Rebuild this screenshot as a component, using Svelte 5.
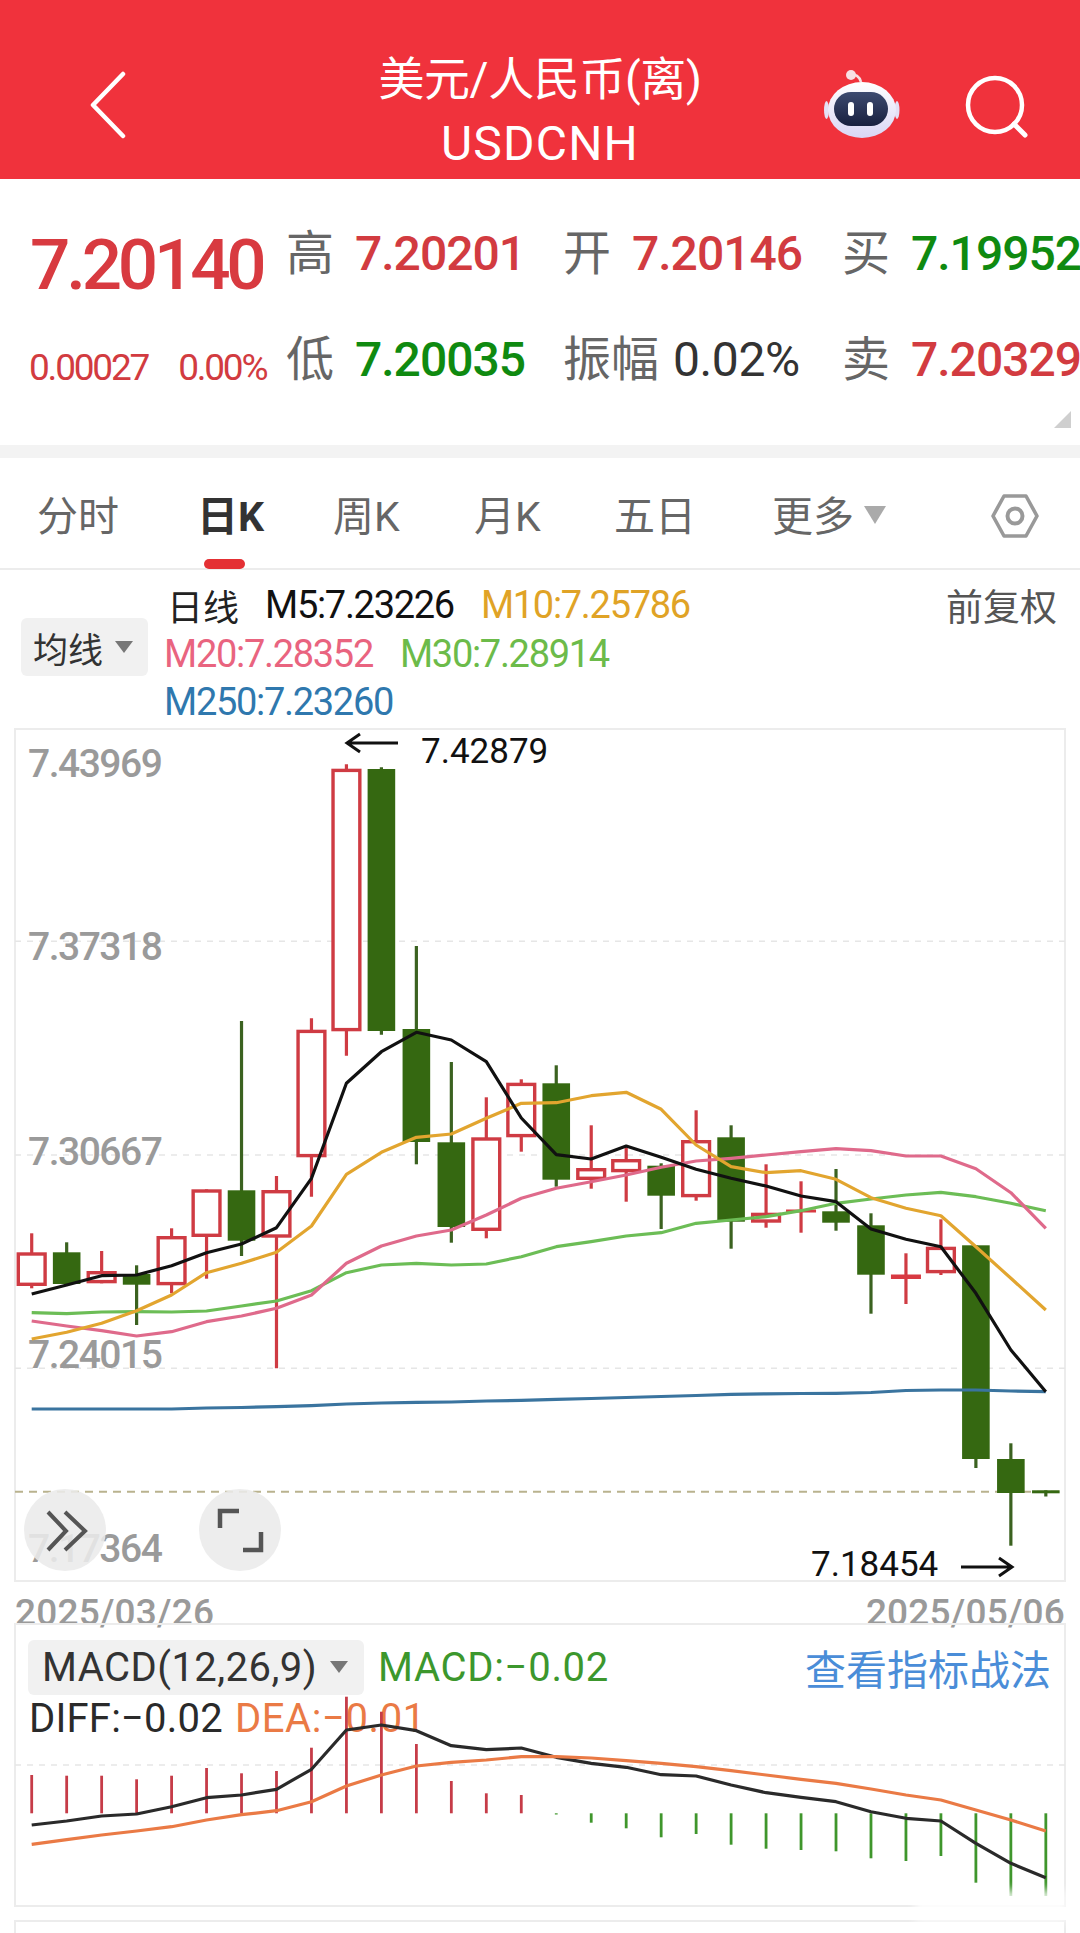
<script>
  const X = (i) => 31.7 + 34.97 * i;
  const pts = (a) => a.map((y, i) => `${X(i).toFixed(1)},${y}`).join(' ');

  const candles = [
    ['r',1252.3,1286,1233.3,1288.3],['g',1252.3,1284,1242.3,1284],['r',1271,1283.3,1251,1283.3],['g',1274,1284.7,1265.3,1325],
    ['r',1236,1285.3,1228.3,1293.3],['r',1189.3,1237,1189.3,1278.7],['g',1190.3,1240.7,1021,1256],['r',1190,1237.7,1176,1368.3],
    ['r',1029.7,1157.3,1018.3,1196.7],['r',768.7,1031.3,764.3,1055.7],['g',769,1031,767.3,1034.7],['g',1029,1142,946,1164.3],
    ['g',1142.3,1227,1062,1242.7],['r',1137.3,1231,1097.3,1238.3],['r',1082.7,1137.3,1079.3,1151.7],['g',1083.3,1179.7,1065.3,1186.7],
    ['r',1168,1180,1125.3,1188.7],['r',1159,1172.3,1146.7,1201.7],['g',1165.7,1195.7,1163.3,1229],['r',1140,1197.3,1110.3,1200.7],
    ['g',1137.3,1221.7,1125.3,1248.7],['r',1212.7,1222.7,1164.3,1227.7],['d',1209.5,1212.5,1181.3,1232.7],['g',1211.3,1222.7,1169,1230.7],
    ['g',1225.3,1274.7,1213.3,1313.7],['d',1274.5,1279,1253.3,1304],['r',1246.7,1273.3,1219.3,1275],['g',1245.3,1459,1245.3,1468],
    ['g',1459,1493,1443.3,1545.7],['g',1490.3,1493.3,1490.3,1496.5]
  ];

  const m5 = [1294,1285,1275.7,1275,1265.7,1252.7,1244,1227.7,1178.3,1083.3,1051.7,1032.3,1040,1061.7,1118,1154.7,1159,1146,1157.3,1169.3,1178.3,1186,1196,1201.7,1229,1239.3,1246.7,1293.3,1350,1391.7];
  const m10 = [1339,1332.3,1323.3,1310.7,1295,1272.7,1263.3,1252.3,1226,1174.3,1152.3,1137.3,1134,1118.3,1103.3,1102.7,1095.7,1092.3,1109.3,1145,1166.7,1172.7,1170.7,1179.3,1197.7,1208.3,1215.7,1246.7,1278.3,1310];
  const m20 = [1321,1326,1330.7,1336,1331.7,1321.7,1316,1308.3,1295,1263.3,1246,1236,1230,1215,1198.3,1188.3,1181.7,1175,1167.3,1161,1158.3,1155,1151.7,1148.7,1150.7,1156,1156,1168.7,1192.7,1228.3];
  const m30 = [1312.7,1313.7,1312,1311.7,1312,1311,1306,1301,1290.7,1272.7,1265,1263.3,1265,1264,1256.7,1246.7,1241.7,1236,1232.7,1223.3,1220,1216.7,1210.7,1203.3,1199,1195,1192.3,1196.7,1203.3,1210.7];
  const m250 = [1409,1409,1409,1409,1409,1408,1407.5,1406.7,1405.7,1404,1403,1402.3,1402,1401,1400.3,1399.3,1398.5,1397.5,1396.5,1395.5,1394.3,1393.8,1393.5,1393.3,1392.5,1390.5,1390,1390,1391,1391.7];

  const bars = [1775,1775.7,1775.7,1779.3,1775.7,1768,1773.3,1771,1747.7,1696.7,1711.7,1744,1781,1793.3,1795,1814.5,1822.7,1828.3,1837.3,1834,1844.7,1848.7,1850,1851.3,1858.3,1861,1856,1882.7,1896,1896];
  const diff = [1825,1821,1816,1814,1806.7,1797.7,1795,1789.3,1769.3,1730,1725,1730.7,1745.7,1749.7,1748,1757.3,1763.3,1767.3,1774.7,1776,1785,1792.7,1797.3,1801.7,1811.7,1818.3,1821,1843.3,1863.3,1877.7];
  const dea = [1844.3,1839.7,1835,1831,1826.7,1820,1814.7,1810.7,1801.7,1786,1775,1766,1762.3,1760,1756.7,1756.7,1758,1760.7,1763.3,1766.7,1770.7,1775,1779.3,1783.3,1789,1795,1800,1810,1820,1831];

  const axis = [['7.43969',777],['7.37318',960],['7.30667',1165],['7.24015',1368],['7.17364',1562]];
  const tabs = [['分时',160,false],['日K',136,true],['周K',141,false],['月K',140,false],['五日',158,false]];
</script>

<div class="page">
  <header class="top">
    <svg class="back" width="40" height="68" viewBox="0 0 40 68"><path d="M35 3 5 34l30 31" fill="none" stroke="#fff" stroke-width="4.5" stroke-linecap="round" stroke-linejoin="round"/></svg>
    <div class="title">
      <div class="t1">美元/人民币(离)</div>
      <div class="t2">USDCNH</div>
    </div>
    <div class="tools">
      <svg class="bot" width="78" height="70" viewBox="0 0 78 70">
        <defs>
          <linearGradient id="shell" x1="0" y1="0" x2="0" y2="1"><stop offset="0" stop-color="#fff"/><stop offset="1" stop-color="#d9d6f5"/></linearGradient>
          <linearGradient id="visor" x1="0" y1="0" x2="0" y2="1"><stop offset="0" stop-color="#3d4a70"/><stop offset="1" stop-color="#18203f"/></linearGradient>
        </defs>
        <path d="M38 13c-1-5-6-9-11-7" fill="none" stroke="#f7dfe4" stroke-width="2.5"/>
        <circle cx="28" cy="6" r="5" fill="#f8dfe4"/>
        <ellipse cx="3.5" cy="41" rx="2.5" ry="9" fill="#e4e0f5"/>
        <ellipse cx="74" cy="41" rx="2.5" ry="9" fill="#e4e0f5"/>
        <ellipse cx="39" cy="41" rx="34" ry="28" fill="url(#shell)"/>
        <rect x="11" y="23" width="54" height="34" rx="17" fill="url(#visor)"/>
        <rect x="25" y="33" width="6" height="14" rx="3" fill="#fff"/>
        <rect x="44" y="33" width="6" height="14" rx="3" fill="#fff"/>
      </svg>
      <svg class="search" width="70" height="70" viewBox="0 0 70 70"><circle cx="31" cy="31" r="27" fill="none" stroke="#fff" stroke-width="4.5"/><path d="M50 50l11 11" stroke="#fff" stroke-width="5" stroke-linecap="round"/></svg>
    </div>
  </header>

  <section class="quote">
    <div class="price">7.20140</div>
    <div class="cell"><span class="lab">高</span><span class="val up">7.20201</span></div>
    <div class="cell"><span class="lab">开</span><span class="val up">7.20146</span></div>
    <div class="cell"><span class="lab">买</span><span class="val down">7.19952</span></div>
    <div class="chg"><span>0.00027</span><span>0.00%</span></div>
    <div class="cell"><span class="lab">低</span><span class="val down">7.20035</span></div>
    <div class="cell"><span class="lab wide">振幅</span><span class="val flat">0.02%</span></div>
    <div class="cell"><span class="lab">卖</span><span class="val up">7.20329</span></div>
    <span class="corner"></span>
  </section>
  <div class="band"></div>

  <nav class="tabs">
    {#each tabs as [name, w, on]}
      <div class="tab" class:on style="width:{w}px">{name}{#if on}<i class="mark"></i>{/if}</div>
    {/each}
    <div class="tab more">更多<b class="tri big"></b></div>
    <svg class="gear" width="50" height="46" viewBox="0 0 50 46"><path d="M14 3h22l11 20-11 20H14L3 23Z" fill="none" stroke="#999" stroke-width="3.6" stroke-linejoin="round"/><circle cx="25" cy="23" r="7.5" fill="none" stroke="#999" stroke-width="4"/></svg>
  </nav>

  <section class="legend">
    <div class="pill">均线<b class="tri"></b></div>
    <div class="rows">
      <div class="row">
        <span class="day">日线</span><span class="k m5">M5:7.23226</span><span class="k m10">M10:7.25786</span><span class="adj">前复权</span>
      </div>
      <div class="row"><span class="k m20">M20:7.28352</span><span class="k m30">M30:7.28914</span></div>
      <div class="row"><span class="k m250">M250:7.23260</span></div>
    </div>
  </section>

  <div class="chart">
    <svg width="1080" height="860" viewBox="0 726 1080 860">
      <rect x="15" y="729" width="1050" height="852" fill="none" stroke="#ececec" stroke-width="2"/>
      {#each [941.3,1155,1368.3] as y}
        <line x1="15" x2="1065" y1={y} y2={y} stroke="#e6e6e6" stroke-width="1.5" stroke-dasharray="6 6"/>
      {/each}
      <line x1="15" x2="1065" y1="1491.7" y2="1491.7" stroke="#b9b28e" stroke-width="2" stroke-dasharray="8 6"/>
      {#each axis as [t, y]}
        <text x="28" y={y} class="ax">{t}</text>
      {/each}
      {#each candles as [k, top, bot, wt, wb], i}
        {#if k === 'g'}
          <line x1={X(i)} x2={X(i)} y1={wt} y2={wb} stroke="#3b6220" stroke-width="3.2"/>
          <rect x={X(i) - 13.8} y={top} width="27.6" height={bot - top} fill="#356811"/>
        {:else if k === 'r'}
          <line x1={X(i)} x2={X(i)} y1={wt} y2={wb} stroke="#cf3b43" stroke-width="3.2"/>
          <rect x={X(i) - 13.4} y={top + 1.7} width="26.8" height={bot - top - 3.4} fill="#fff" stroke="#cf3b43" stroke-width="3.4"/>
        {:else}
          <line x1={X(i)} x2={X(i)} y1={wt} y2={wb} stroke="#cf3b43" stroke-width="3.2"/>
          <rect x={X(i) - 15} y={top} width="30" height={bot - top} fill="#d83a42"/>
        {/if}
      {/each}
      <polyline points={pts(m250)} class="ln" stroke="#3a749f"/>
      <polyline points={pts(m30)} class="ln" stroke="#6cbd56"/>
      <polyline points={pts(m20)} class="ln" stroke="#df6a8b"/>
      <polyline points={pts(m10)} class="ln" stroke="#e2a52f"/>
      <polyline points={pts(m5)} class="ln" stroke="#111"/>
      <path d="M398 743h-50m12-9-13 9 13 9" class="arr"/>
      <text x="421" y="763" class="mk">7.42879</text>
      <text x="811" y="1576" class="mk">7.18454</text>
      <path d="M961 1567h50m-12-9 13 9-13 9" class="arr"/>
    </svg>
    <button class="fab one" aria-label="展开"><svg width="82" height="82" viewBox="24 1489 82 82"><path d="M48 1512l18 19-18 19M65 1512l20 19-20 19" fill="none" stroke="#555" stroke-width="4"/></svg></button>
    <button class="fab two" aria-label="全屏"><svg width="82" height="82" viewBox="199 1489 82 82"><path d="M239 1511h-19v17M243 1550h18v-18" fill="none" stroke="#555" stroke-width="4.5"/></svg></button>
  </div>

  <div class="dates"><span>2025/03/26</span><span>2025/05/06</span></div>

  <section class="macd">
    <div class="mhead">
      <div class="mpill">MACD(12,26,9)<b class="tri"></b></div>
      <span class="mval">MACD:−0.02</span>
      <span class="mlink">查看指标战法</span>
    </div>
    <div class="mline"><span class="diff">DIFF:−0.02</span><span class="dea">DEA:−0.01</span></div>
    <svg class="msvg" width="1052" height="284" viewBox="14 1623 1052 284">
      <line x1="15" x2="1065" y1="1765" y2="1765" stroke="#e6e6e6" stroke-width="1.5" stroke-dasharray="6 6"/>
      {#each bars as y, i}
        <line x1={X(i)} x2={X(i)} y1={y} y2="1813.3" stroke={i < 15 ? '#c63c48' : '#3f962c'} stroke-width="2.8"/>
      {/each}
      <polyline points={pts(diff)} class="ln" stroke="#2a2a2a"/>
      <polyline points={pts(dea)} class="ln" stroke="#ea7a45"/>
    </svg>
  </section>
  <section class="next"></section>
  <div class="wm"></div>
</div>

<style>
  :global(body) { margin: 0; background: #fff; }
  .page {
    position: relative;
    width: 1080px;
    height: 1933px;
    overflow: hidden;
    background: #fff;
    font-family: Roboto, "Noto Sans CJK SC", sans-serif;
  }
  .top {
    height: 179px;
    background: #f0323c;
    display: grid;
    grid-template-columns: 1fr 500px 1fr;
    color: #fff;
  }
  .back { margin: 71px 0 0 88px; }
  .title { text-align: center; padding-top: 54px; }
  .t1 { font-size: 46px; line-height: 50px; letter-spacing: -0.4px; }
  .t2 { font-size: 48px; line-height: 50px; margin-top: 15px; letter-spacing: 1.2px; }
  .tools { display: flex; align-items: flex-start; padding-left: 33px; }
  .bot { margin: 69px 63px 0 0; flex: none; }
  .search { margin-top: 74px; flex: none; }

  .quote {
    position: relative;
    height: 266px;
    box-sizing: border-box;
    padding: 22px 0 0 30px;
    display: grid;
    grid-template-columns: 256px 277px 279px 238px;
    grid-template-rows: 106px 106px;
    align-items: center;
  }
  .price {
    font-size: 71px;
    font-weight: 500;
    letter-spacing: -4.2px;
    color: #d83a40;
    line-height: 60px;
    margin-top: 21px;
  }
  .cell { display: flex; align-items: center; white-space: nowrap; }
  .lab { width: 69px; font-size: 48px; color: #666; line-height: 50px; flex: none; }
  .lab.wide { width: 110px; font-size: 48px; }
  .val { font-size: 48px; font-weight: 500; letter-spacing: -1px; line-height: 50px; }
  .up { color: #d23b40; }
  .down { color: #0f8a10; }
  .flat { color: #333; letter-spacing: -0.4px; font-weight: 400; }
  .chg {
    display: flex;
    gap: 30px;
    font-size: 37px;
    letter-spacing: -2.2px;
    color: #d23b40;
    margin: 14px 0 0 -1px;
    white-space: nowrap;
  }
  .corner {
    position: absolute;
    right: 9px;
    bottom: 17px;
    width: 0;
    height: 0;
    border-left: 17px solid transparent;
    border-bottom: 17px solid #cfcfcf;
  }
  .band { height: 13px; background: #f3f3f3; }

  .tabs {
    position: relative;
    height: 112px;
    box-sizing: border-box;
    padding: 25px 0 0 37px;
    border-bottom: 2px solid #ececec;
    display: flex;
    align-items: flex-start;
  }
  .tab {
    position: relative;
    flex: none;
    font-size: 41px;
    line-height: 68px;
    color: #666;
    white-space: nowrap;
  }
  .tab.on { color: #333; font-weight: 700; }
  .mark {
    position: absolute;
    left: 7px;
    top: 76px;
    width: 41px;
    height: 10px;
    border-radius: 5px;
    background: #e43034;
  }
  .more { display: flex; align-items: center; gap: 10px; }
  .tri {
    display: inline-block;
    width: 0;
    height: 0;
    border-left: 9px solid transparent;
    border-right: 9px solid transparent;
    border-top: 12px solid #777;
  }
  .tri.big {
    border-left-width: 11px;
    border-right-width: 11px;
    border-top: 18px solid #aaa;
    margin-top: -4px;
  }
  .gear { margin: 10px 0 0 auto; padding-right: 40px; flex: none; }

  .legend {
    height: 156px;
    box-sizing: border-box;
    display: flex;
    align-items: center;
    padding: 11px 21px 0 21px;
  }
  .pill {
    flex: none;
    width: 127px;
    height: 58px;
    box-sizing: border-box;
    padding-left: 12px;
    margin-top: -13px;
    background: #f1f1f1;
    border-radius: 6px;
    display: flex;
    align-items: center;
    gap: 12px;
    font-size: 35px;
    color: #333;
  }
  .rows { flex: 1; margin-left: 16px; }
  .row {
    height: 48.5px;
    display: flex;
    align-items: center;
    white-space: nowrap;
    font-size: 38px;
    letter-spacing: -1.3px;
  }
  .day { margin-left: 3px; width: 98px; font-size: 36px; color: #222; letter-spacing: 0; }
  .k { margin-right: 27px; }
  .m5 { color: #111; }
  .m10 { color: #e0a326; }
  .m20 { color: #e9647f; }
  .m30 { color: #6cbb4a; }
  .m250 { color: #2f78ae; }
  .adj { margin-left: auto; margin-right: 2px; font-size: 37px; color: #555; letter-spacing: 0; }

  .chart { position: relative; height: 860px; }
  .chart svg { display: block; }
  .ax { font-size: 39px; font-weight: 500; fill: #9a9a9a; letter-spacing: -1.5px; font-family: Roboto, sans-serif; }
  .mk { font-size: 35px; fill: #111; font-family: Roboto, sans-serif; }
  .arr { fill: none; stroke: #111; stroke-width: 3; }
  .ln { fill: none; stroke-width: 3.2; stroke-linejoin: round; }
  .fab {
    position: absolute;
    top: 763px;
    width: 82px;
    height: 82px;
    padding: 0;
    border: 0;
    border-radius: 50%;
    background: rgba(235, 235, 235, 0.88);
  }
  .fab.one { left: 24px; }
  .fab.two { left: 199px; }

  .dates {
    position: relative;
    height: 37px;
    box-sizing: border-box;
    padding: 8px 15px 0;
    display: flex;
    justify-content: space-between;
    font-size: 37px;
    font-weight: 500;
    line-height: 37px;
    color: #9a9a9a;
    letter-spacing: 0.2px;
  }

  .macd {
    position: relative;
    width: 1052px;
    height: 284px;
    margin-left: 14px;
    box-sizing: border-box;
    border: 2px solid #ececec;
    padding: 12px 14px 0 12px;
  }
  .mhead { display: flex; align-items: center; }
  .mpill {
    width: 336px;
    height: 55px;
    box-sizing: border-box;
    padding-left: 14px;
    background: #f1f1f1;
    border-radius: 6px;
    display: flex;
    align-items: center;
    gap: 13px;
    font-size: 40px;
    letter-spacing: 0.45px;
    color: #333;
  }
  .mval { margin-left: 14px; font-size: 40px; color: #3c972d; letter-spacing: 0.7px; }
  .mlink { margin-left: auto; margin-right: -1px; font-size: 41px; color: #4a8dd8; }
  .mline { display: flex; gap: 12px; margin-left: 1px; font-size: 40px; line-height: 44px; letter-spacing: 0.2px; }
  .diff { color: #2a2a2a; }
  .dea { color: #ea7a45; letter-spacing: 0.6px; }
  .msvg { position: absolute; left: -2px; top: -2px; }
  .next {
    width: 1052px;
    height: 40px;
    margin: 13px 0 0 14px;
    box-sizing: border-box;
    border: 2px solid #ececec;
  }
  .wm {
    position: absolute;
    left: 915px;
    top: 1890px;
    width: 152px;
    height: 32px;
    background: rgba(255, 255, 255, 0.85);
    filter: blur(5px);
  }
</style>
